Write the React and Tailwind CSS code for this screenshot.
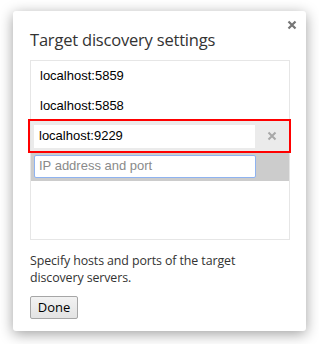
import React from "react";

function Row({ text }) {
  return (
    <div className="h-[30px] flex items-center pl-[9px] text-[13px] text-black" style={{ fontFamily: '"Liberation Sans", Arial, sans-serif' }}>
      {text}
    </div>
  );
}

export default function App() {
  return (
    <div className="w-[319px] h-[344px] bg-white pt-[11px] pl-[13px]">
      <div className="relative w-[293px] h-[320px] bg-white rounded-[3px] shadow-[0_3px_14px_rgba(0,0,0,0.38)] pt-[18px] px-[17px]" style={{ fontFamily: '"Open Sans", "Noto Sans", sans-serif' }}>
        <div className="absolute right-[9px] top-[9px] text-[#777] leading-none">
          <svg width="10" height="10" viewBox="0 0 10 10">
            <path d="M1.5 1.5 L8.5 8.5 M8.5 1.5 L1.5 8.5" stroke="#767676" strokeWidth="2.2" />
          </svg>
        </div>
        <div className="text-[16.5px] leading-[22px] text-[#333] tracking-[-0.2px]">Target discovery settings</div>
        <div className="mt-[9px] w-[260px] h-[180px] border border-[#e6e6e6] relative">
          <Row text="localhost:5859" />
          <Row text="localhost:5858" />
          <div className="h-[30px] bg-[#ebebeb] flex items-center pl-[3px]">
            <div className="w-[221px] h-[23px] bg-white flex items-center pl-[5px] text-[13px] text-black" style={{ fontFamily: '"Liberation Sans", Arial, sans-serif' }}>localhost:9229</div>
            <div className="flex-1 flex items-center justify-center">
              <svg width="10" height="10" viewBox="0 0 10 10">
                <path d="M1.5 1.5 L8.5 8.5 M8.5 1.5 L1.5 8.5" stroke="#a8a8a8" strokeWidth="2" />
              </svg>
            </div>
          </div>
          <div className="h-[30px] bg-[#cccccc] flex items-center pl-[3px]">
            <div className="w-[222px] h-[23px] bg-white border border-[#8fb3f0] rounded-[2px] flex items-center pl-[4px] text-[13px] text-[#8a8a8a]" style={{ fontFamily: '"Liberation Sans", Arial, sans-serif' }}>IP address and port</div>
          </div>
          <div className="absolute left-[-3px] top-[58px] w-[263px] h-[34px] border-2 border-[#ff0000]"></div>
        </div>
        <div className="mt-[12px] text-[12.4px] leading-[17px] text-[#333] w-[240px] tracking-[-0.1px]">Specify hosts and ports of the target discovery servers.</div>
        <button className="mt-[10px] w-[48px] h-[23px] border border-[#a6a6a6] rounded-[2px] bg-gradient-to-b from-[#f2f2f2] to-[#e3e3e3] text-[13px] text-black leading-none">Done</button>
      </div>
    </div>
  );
}
